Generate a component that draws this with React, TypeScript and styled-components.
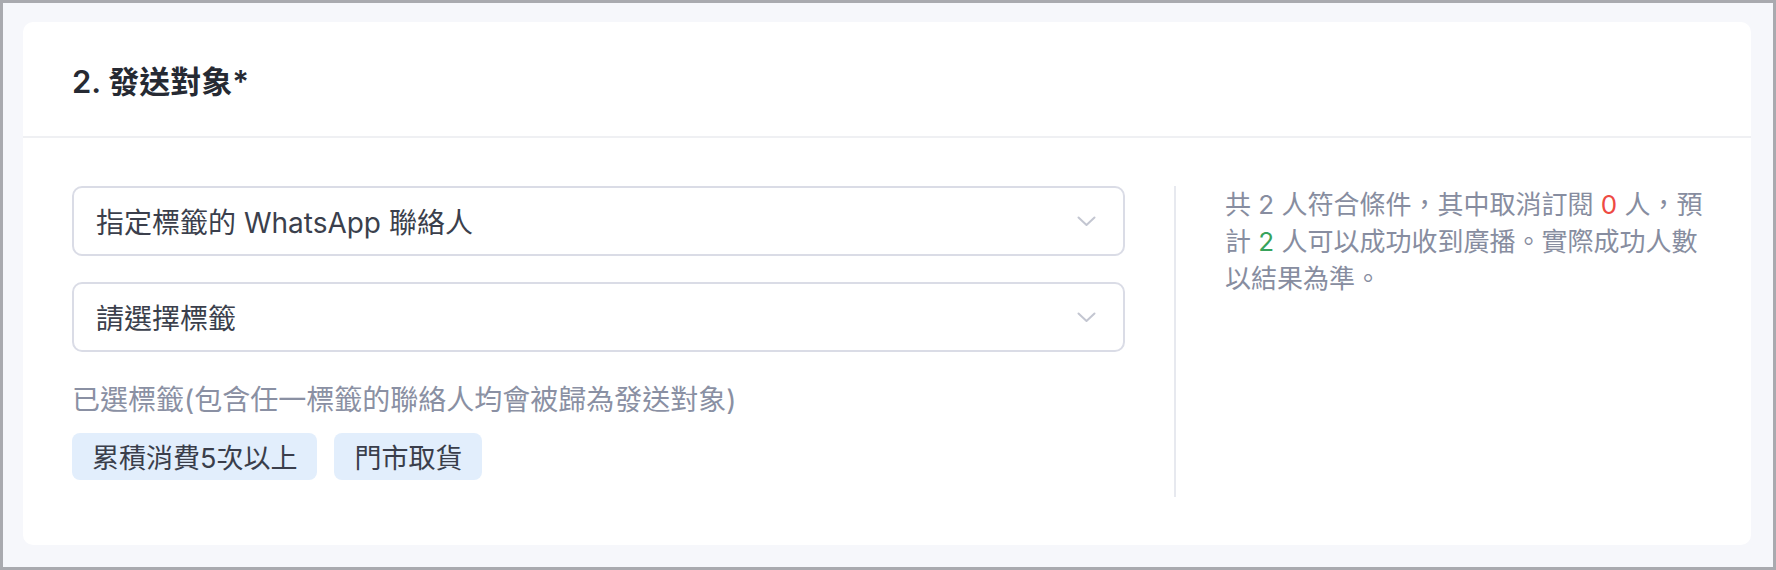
import styled, { createGlobalStyle } from 'styled-components';

const GlobalStyle = createGlobalStyle`
  html, body {
    margin: 0;
    padding: 0;
  }
  body {
    font-family: Inter, 'Noto Sans CJK TC', 'Noto Sans', sans-serif;
    background: #f6f7fb;
  }
  * {
    box-sizing: border-box;
  }
`;

const Frame = styled.div`
  height: 570px;
  border: 3px solid #a9aaaf;
  background: #f6f7fb;
  padding: 19px 22px 22px 20px;
  display: flex;
`;

const Card = styled.section`
  flex: 1;
  background: #ffffff;
  border-radius: 10px;
  display: flex;
  flex-direction: column;
`;

const Header = styled.header`
  height: 117px;
  padding: 0 49px;
  display: flex;
  align-items: center;
  border-bottom: 2px solid #eff0f3;
`;

const Title = styled.h2`
  margin: 0;
  font-size: 31px;
  font-weight: 600;
  color: #262a33;
`;

const Body = styled.div`
  padding: 48px 24px 48px 49px;
  display: grid;
  grid-template-columns: 1053px 2px 1fr;
  column-gap: 49px;
`;

const LeftColumn = styled.div`
  display: flex;
  flex-direction: column;
  padding-bottom: 17px;
`;

const Select = styled.div<{ $spaced?: boolean }>`
  height: 70px;
  margin-top: ${(p) => (p.$spaced ? '26px' : '0')};
  border: 2px solid #dadce6;
  border-radius: 10px;
  padding: 0 27px 0 22px;
  display: flex;
  align-items: center;
  justify-content: space-between;
  font-size: 28px;
  color: #3b3f4c;
`;

const Helper = styled.p`
  margin: 29px 0 14px;
  line-height: 38px;
  font-size: 28px;
  color: #8a90a3;
`;

const TagRow = styled.div`
  display: flex;
  gap: 17px;
`;

const Tag = styled.span`
  height: 47px;
  padding: 0 20px;
  display: inline-flex;
  align-items: center;
  background: #e2eefc;
  border-radius: 8px;
  font-size: 27px;
  color: #3a3e4b;
`;

const Divider = styled.div`
  background: #e7e9ef;
`;

const Summary = styled.p`
  margin: 0;
  font-size: 26px;
  line-height: 37px;
  color: #878da0;
  max-width: 492px;
`;

const Count = styled.span<{ $tone: 'red' | 'green' }>`
  color: ${(p) => (p.$tone === 'red' ? '#ee4a43' : '#38a35b')};
`;

function Chevron() {
  return (
    <svg width="19" height="11" viewBox="0 0 19 11" fill="none">
      <path d="M1.5 1.5 L9.5 9 L17.5 1.5" stroke="#c3c6d1" strokeWidth="2" strokeLinecap="round" strokeLinejoin="round" />
    </svg>
  );
}

const tags = ['累積消費5次以上', '門市取貨'];

export default function App() {
  return (
    <>
      <GlobalStyle />
      <Frame>
        <Card>
          <Header>
            <Title>2. 發送對象*</Title>
          </Header>
          <Body>
            <LeftColumn>
              <Select>
                <span>指定標籤的 WhatsApp 聯絡人</span>
                <Chevron />
              </Select>
              <Select $spaced>
                <span>請選擇標籤</span>
                <Chevron />
              </Select>
              <Helper>已選標籤(包含任一標籤的聯絡人均會被歸為發送對象)</Helper>
              <TagRow>
                {tags.map((tag) => (
                  <Tag key={tag}>{tag}</Tag>
                ))}
              </TagRow>
            </LeftColumn>
            <Divider />
            <Summary>
              共 2 人符合條件，其中取消訂閱 <Count $tone="red">0</Count> 人，預計 <Count $tone="green">2</Count> 人可以成功收到廣播。實際成功人數以結果為準。
            </Summary>
          </Body>
        </Card>
      </Frame>
    </>
  );
}
